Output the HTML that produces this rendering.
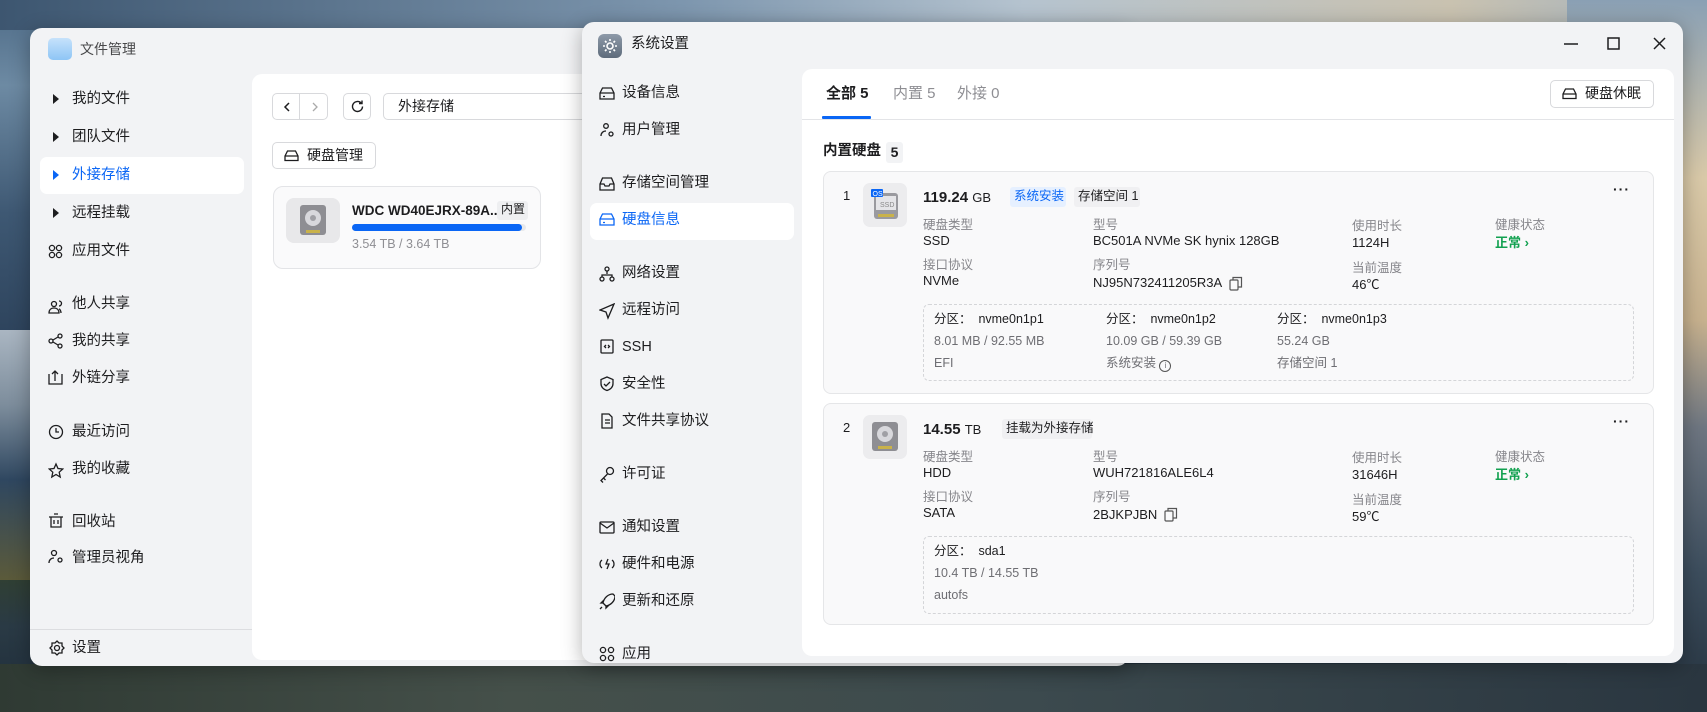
<!DOCTYPE html>
<html><head><meta charset="utf-8"><style>
*{margin:0;padding:0;box-sizing:border-box}
body{width:1707px;height:712px;overflow:hidden;position:relative;font-family:"Liberation Sans","Noto Sans CJK SC",sans-serif;color:#1d1d1f;line-height:1.3;
background:linear-gradient(180deg,#4d6a86 0%,#6d8aa3 12%,#3e5873 30%,#263a52 55%,#314030 80%,#2a3a45 88%,#1d2b38 100%)}
.bgr{position:absolute;right:0;top:0;width:140px;height:712px;background:linear-gradient(180deg,#8aa0b4 0%,#d9c9a8 25%,#c7b18e 45%,#6e7681 60%,#3d4e5e 80%,#25323e 100%)}
.bgt{position:absolute;left:0;top:0;width:1707px;height:30px;background:linear-gradient(90deg,#3d5670,#7d96ae 40%,#b5c3cf 60%,#c9c2b0 85%,#9fb0c0)}
.bgl{position:absolute;left:0;top:330px;width:40px;height:250px;background:linear-gradient(180deg,#aab6c2,#7d8d9c 30%,#2f4760 60%,#5b5a3a)}
.bgb{position:absolute;left:0;top:664px;width:1707px;height:48px;background:linear-gradient(90deg,#2f3a33,#45504a 30%,#3c4a4e 60%,#2a3640)}
.win{position:absolute;background:#f2f3f5;border-radius:12px;overflow:hidden;box-shadow:0 4px 20px rgba(0,0,0,.3)}
.a{position:absolute;white-space:nowrap}
.ico{position:absolute}
.side{font-size:14.5px;color:#1d1d1f}
.lbl{font-size:12.5px;color:#86868b}
.val{font-size:13px;color:#1d1d1f}
.card{position:absolute;background:#f9f9fa;border:1px solid #e5e6e8;border-radius:8px}
.dash{position:absolute;border:1px dashed #d4d5d8;border-radius:6px}
.pt{font-size:12.5px}
</style></head><body>
<div class="bgt"></div><div class="bgr"></div><div class="bgl"></div><div class="bgb"></div>

<!-- File manager window -->
<div class="win" style="left:30px;top:28px;width:1099px;height:638px">
  <div class="a" style="left:18px;top:10px;width:24px;height:22px;border-radius:5px;background:linear-gradient(180deg,#c6e2fb,#8ec5f5)"></div>
  <div class="a" style="left:50px;top:12px;font-size:14px;color:#48484a">文件管理</div>
  <div class="a" style="left:10px;top:129px;width:204px;height:37px;background:#fff;border-radius:7px"></div>
  <div class="a side" style="left:42px;top:62px">我的文件</div>
  <div class="a side" style="left:42px;top:100px">团队文件</div>
  <div class="a side" style="left:42px;top:138px;color:#0a66f5">外接存储</div>
  <div class="a side" style="left:42px;top:176px">远程挂载</div>
  <div class="a side" style="left:42px;top:214px">应用文件</div>
  <div class="a side" style="left:42px;top:267px">他人共享</div>
  <div class="a side" style="left:42px;top:304px">我的共享</div>
  <div class="a side" style="left:42px;top:341px">外链分享</div>
  <div class="a side" style="left:42px;top:395px">最近访问</div>
  <div class="a side" style="left:42px;top:432px">我的收藏</div>
  <div class="a side" style="left:42px;top:485px">回收站</div>
  <div class="a side" style="left:42px;top:521px">管理员视角</div>
  <div class="a side" style="left:42px;top:611px">设置</div>
  <svg class="ico" style="left:20px;top:63px" width="12" height="140" viewBox="0 0 12 140">
    <path d="M3 3l6 5-6 5z" fill="#1d1d1f"/><path d="M3 41l6 5-6 5z" fill="#1d1d1f"/><path d="M3 79l6 5-6 5z" fill="#0a66f5"/><path d="M3 117l6 5-6 5z" fill="#1d1d1f"/>
  </svg>
  <svg class="ico" style="left:18px;top:215px" width="16" height="330" viewBox="0 0 16 330" fill="none" stroke="#1d1d1f" stroke-width="1.3">
    <g transform="translate(0,1)"><circle cx="4" cy="4" r="2.6"/><circle cx="11" cy="4" r="2.6"/><circle cx="4" cy="11" r="2.6"/><circle cx="11" cy="11" r="2.6"/></g>
    <g transform="translate(0,6)"><circle cx="6" cy="55" r="2.5"/><path d="M1 64c0-4 3-5 5-5s5 1 5 5z"/><path d="M11 52a2 2 0 010 5M13 64c0-2-1-4-2-4"/></g>
    <g transform="translate(0,1)"><circle cx="3" cy="97" r="2"/><circle cx="12" cy="92" r="2"/><circle cx="12" cy="102" r="2"/><path d="M5 96l5-3M5 98l5 3"/></g>
    <path d="M1 131v10h13v-10M7 138v-9M4 131l3-3 3 3"/>
    <g transform="translate(0,9)"><circle cx="8" cy="180" r="6.5"/><path d="M8 176v4h3"/></g>
    <g transform="translate(0,10)"><path d="M8 211l2 4.5 4.8.5-3.6 3.2 1 4.8-4.2-2.5-4.2 2.5 1-4.8-3.6-3.2 4.8-.5z"/></g>
    <g transform="translate(0,12)"><path d="M3 262h10v10H3zM1 262h14M6 259h4M6 265v4M10 265v4"/></g>
    <g transform="translate(0,12)"><circle cx="6" cy="298" r="2.5"/><path d="M1 308c0-3 2-5 5-5"/><circle cx="12" cy="305" r="2"/></g>
  </svg>
  <svg class="ico" style="left:19px;top:612px" width="16" height="16" viewBox="0 0 16 16" fill="none" stroke="#1d1d1f" stroke-width="1.3"><circle cx="8" cy="8" r="2.5"/><path d="M8 1l2 2h3v3l2 2-2 2v3h-3l-2 2-2-2H3v-3L1 8l2-2V3h3z"/></svg>
  <div class="a" style="left:0;top:601px;width:222px;height:1px;background:#dcdde0"></div>
  <div class="a" style="left:222px;top:46px;width:870px;height:586px;background:#fff;border-radius:10px"></div>
  <div class="a" style="left:242px;top:65px;width:56px;height:27px;border:1px solid #d8d9dc;border-radius:5px;background:#fff"></div>
  <div class="a" style="left:269px;top:66px;width:1px;height:25px;background:#d8d9dc"></div>
  <svg class="ico" style="left:250px;top:72px" width="44" height="14"><path d="M9 3l-4 4 4 4" stroke="#1d1d1f" stroke-width="1.5" fill="none"/><path d="M33 3l4 4-4 4" stroke="#aaa" stroke-width="1.3" fill="none"/></svg>
  <div class="a" style="left:313px;top:65px;width:28px;height:27px;border:1px solid #d8d9dc;border-radius:5px"></div>
  <svg class="ico" style="left:320px;top:71px" width="15" height="15" fill="none" stroke="#1d1d1f" stroke-width="1.4"><path d="M12.5 7.5a5 5 0 11-1.5-3.6M12 1.5v3h-3"/></svg>
  <div class="a" style="left:353px;top:65px;width:300px;height:27px;border:1px solid #d8d9dc;border-radius:5px"></div>
  <div class="a" style="left:368px;top:69px;font-size:14px">外接存储</div>
  <div class="a" style="left:242px;top:114px;width:104px;height:27px;border:1px solid #d8d9dc;border-radius:5px"></div>
  <svg class="ico" style="left:254px;top:121px" width="15" height="13" fill="none" stroke="#1d1d1f" stroke-width="1.3"><path d="M1 7l2.5-5h8L14 7v4.5H1zM1 7h13"/></svg>
  <div class="a" style="left:277px;top:118px;font-size:14px">硬盘管理</div>
  <div class="a" style="left:243px;top:158px;width:268px;height:83px;border:1px solid #e3e4e7;border-radius:10px;background:#fafafb"></div>
  <div class="a" style="left:256px;top:170px;width:54px;height:45px;border-radius:8px;background:#e8e8ea"></div>
  <svg class="ico" style="left:268px;top:175px" width="30" height="35"><rect x="2" y="2" width="26" height="30" rx="3" fill="#8e8e93"/><circle cx="15" cy="15" r="8" fill="#d8d8dc"/><circle cx="15" cy="15" r="3" fill="#a0a0a5"/><rect x="8" y="27" width="14" height="3" fill="#c9b24a"/></svg>
  <div class="a" style="left:322px;top:174px;font-size:13.5px;font-weight:bold;color:#1d1d1f">WDC WD40EJRX-89A...</div>
  <div class="a" style="left:467px;top:173px;width:31px;height:19px;background:#eeeff1;border-radius:3px;font-size:12px;padding:1px 4px">内置</div>
  <div class="a" style="left:322px;top:196px;width:174px;height:7px;border-radius:4px;background:#e8e9eb"></div>
  <div class="a" style="left:322px;top:196px;width:170px;height:7px;border-radius:4px;background:#0a66f5"></div>
  <div class="a" style="left:322px;top:208px;font-size:12.5px;color:#8e8e93">3.54 TB / 3.64 TB</div>
</div>

<!-- Settings window -->
<div class="win" style="left:582px;top:22px;width:1101px;height:641px">
  <div class="a" style="left:16px;top:12px;width:24px;height:24px;border-radius:6px;background:linear-gradient(180deg,#8e9aa9,#5e6b7b)"></div>
  <svg class="ico" style="left:19px;top:15px" width="18" height="18" fill="none" stroke="#fff" stroke-width="1.6"><circle cx="9" cy="9" r="3"/><path d="M9 2v2M9 14v2M2 9h2M14 9h2M4 4l1.5 1.5M12.5 12.5L14 14M4 14l1.5-1.5M12.5 5.5L14 4"/></svg>
  <div class="a" style="left:49px;top:13px;font-size:14.5px;color:#1d1d1f">系统设置</div>
  <svg class="ico" style="left:980px;top:14px" width="110" height="16" fill="none" stroke="#1d1d1f" stroke-width="1.5"><path d="M2 8h14"/><rect x="46" y="2" width="11" height="11"/><path d="M92 2l11 11M103 2L92 13"/></svg>
  <div class="a" style="left:8px;top:181px;width:204px;height:37px;background:#fff;border-radius:7px"></div>
  <div class="a side" style="left:40px;top:62px">设备信息</div>
  <div class="a side" style="left:40px;top:99px">用户管理</div>
  <div class="a side" style="left:40px;top:152px">存储空间管理</div>
  <div class="a side" style="left:40px;top:189px;color:#0a66f5">硬盘信息</div>
  <div class="a side" style="left:40px;top:242px">网络设置</div>
  <div class="a side" style="left:40px;top:279px">远程访问</div>
  <div class="a side" style="left:40px;top:316px">SSH</div>
  <div class="a side" style="left:40px;top:353px">安全性</div>
  <div class="a side" style="left:40px;top:390px">文件共享协议</div>
  <div class="a side" style="left:40px;top:443px">许可证</div>
  <div class="a side" style="left:40px;top:496px">通知设置</div>
  <div class="a side" style="left:40px;top:533px">硬件和电源</div>
  <div class="a side" style="left:40px;top:570px">更新和还原</div>
  <div class="a side" style="left:40px;top:623px">应用</div>
  <svg class="ico" style="left:17px;top:64px" width="16" height="580" viewBox="0 0 16 580" fill="none" stroke="#1d1d1f" stroke-width="1.3">
    <path d="M1 7l2.5-5h9L15 7v6H1zM1 7h14M4 10.5h2"/>
    <circle cx="7" cy="40" r="2.3"/><path d="M2 50c0-3 2-5 5-5"/><circle cx="12" cy="48" r="2"/>
    <path d="M1 98l2.5-6h9L15 98v6H1zM1 98h4l1 2h4l1-2h4"/>
    <path d="M1 133l2.5-5h9L15 133v6H1zM1 133h14M4 136.5h2" stroke="#0a66f5"/>
    <circle cx="8" cy="183" r="2"/><circle cx="3" cy="193" r="2"/><circle cx="13" cy="193" r="2"/><path d="M8 185v3M3 191v-2h10v2"/>
    <path d="M15 218L1 224l6 2 2 6z"/>
    <rect x="2" y="254" width="12" height="13" rx="1"/><path d="M7 259l-1.5 1.5L7 262M9 259l1.5 1.5L9 262"/>
    <g transform="translate(0,2)"><path d="M8 289l6 2.5v4c0 4-3 6-6 7-3-1-6-3-6-7v-4z M5 296l2 2 4-4"/></g>
    <g transform="translate(0,2)"><path d="M3 326h7l3 3v11H3zM6 332h5M6 335h5"/></g>
    <g transform="translate(0,3)"><circle cx="11" cy="382" r="3.5"/><path d="M8.5 385L2 391.5l2 2M4.5 389l2 2"/></g>
    <g transform="translate(0,2)"><rect x="1" y="434" width="14" height="11" rx="1"/><path d="M1 435l7 5 7-5"/></g>
    <g transform="translate(0,4)"><path d="M3 470a5 5 0 000 8M13 470a5 5 0 010 8M9 469l-2 5h3l-2 5"/></g>
    <g transform="translate(0,5)"><path d="M14 503c-5 0-9 4-10 9l3 3c5-1 9-5 9-10zM4 512l-2 0 3-3M7 515v2l3-3M3 516l-2 2"/></g>
    <g transform="translate(0,2)"><circle cx="4" cy="562" r="2.6"/><circle cx="12" cy="562" r="2.6"/><circle cx="4" cy="570" r="2.6"/><circle cx="12" cy="570" r="2.6"/></g>
  </svg>

  <div class="a" style="left:220px;top:47px;width:872px;height:587px;background:#fff;border-radius:10px"></div>
  <div class="a" style="left:244px;top:62px;font-size:15px;font-weight:bold">全部 5</div>
  <div class="a" style="left:311px;top:62px;font-size:15px;color:#8e8e93">内置 5</div>
  <div class="a" style="left:375px;top:62px;font-size:15px;color:#8e8e93">外接 0</div>
  <div class="a" style="left:240px;top:94px;width:49px;height:3px;background:#0a66f5;border-radius:1px"></div>
  <div class="a" style="left:220px;top:97px;width:872px;height:1px;background:#e3e4e7"></div>
  <div class="a" style="left:968px;top:58px;width:104px;height:28px;border:1px solid #d8d9dc;border-radius:5px"></div>
  <svg class="ico" style="left:980px;top:65px" width="15" height="13" fill="none" stroke="#1d1d1f" stroke-width="1.3"><path d="M1 7l2.5-5h8L14 7v4.5H1zM1 7h13"/></svg>
  <div class="a" style="left:1003px;top:62px;font-size:14px">硬盘休眠</div>
  <div class="a" style="left:241px;top:120px;font-size:14.5px;font-weight:bold">内置硬盘</div>
  <div class="a" style="left:304px;top:120px;width:17px;height:21px;background:#f2f3f5;border-radius:3px;font-size:14px;font-weight:bold;text-align:center;padding-top:1px">5</div>

  <div class="card" style="left:241px;top:149px;width:831px;height:223px"></div>
  <div class="a val" style="left:261px;top:166px">1</div>
  <div class="a" style="left:281px;top:161px;width:44px;height:44px;background:#ececee;border-radius:7px"></div>
  <svg class="ico" style="left:287px;top:165px" width="32" height="36"><rect x="5" y="6" width="24" height="26" rx="3" fill="#9a9a9f"/><rect x="7" y="9" width="20" height="14" fill="#e5e5e8"/><text x="11" y="20" font-size="7" fill="#888" font-family="Liberation Sans">SSD</text><rect x="9" y="27" width="16" height="3" fill="#c9b24a"/><rect x="2" y="2" width="12" height="8" rx="1" fill="#0a66f5"/><text x="3.5" y="9" font-size="7" fill="#fff" font-family="Liberation Sans">OS</text></svg>
  <div class="a" style="left:341px;top:166px;font-size:15px;font-weight:bold">119.24 <span style="font-weight:normal;font-size:13px">GB</span></div>
  <div class="a" style="left:428px;top:165px;width:56px;height:20px;background:#e6f0ff;border-radius:3px;font-size:12.5px;color:#0a66f5;padding:1px 4px">系统安装</div>
  <div class="a" style="left:492px;top:165px;width:66px;height:20px;background:#f0f0f2;border-radius:3px;font-size:12.5px;padding:1px 4px">存储空间 1</div>
  <div class="a" style="left:1031px;top:158px;font-size:14px;font-weight:bold;letter-spacing:1px">···</div>
  <div class="a lbl" style="left:341px;top:195px">硬盘类型</div><div class="a val" style="left:341px;top:211px">SSD</div>
  <div class="a lbl" style="left:511px;top:195px">型号</div><div class="a val" style="left:511px;top:211px">BC501A NVMe SK hynix 128GB</div>
  <div class="a lbl" style="left:770px;top:196px">使用时长</div><div class="a val" style="left:770px;top:213px">1124H</div>
  <div class="a lbl" style="left:913px;top:195px">健康状态</div><div class="a val" style="left:913px;top:213px;color:#12a150;font-weight:bold">正常 ›</div>
  <div class="a lbl" style="left:341px;top:235px">接口协议</div><div class="a val" style="left:341px;top:251px">NVMe</div>
  <div class="a lbl" style="left:511px;top:235px">序列号</div><div class="a val" style="left:511px;top:253px">NJ95N732411205R3A</div>
  <svg class="ico" style="left:647px;top:254px" width="14" height="15" fill="none" stroke="#555" stroke-width="1.2"><rect x="1" y="4" width="8" height="10" rx="1"/><path d="M4 4V1.5h8.5v9.5H9"/></svg>
  <div class="a lbl" style="left:770px;top:238px">当前温度</div><div class="a val" style="left:770px;top:255px">46℃</div>
  <div class="dash" style="left:341px;top:282px;width:711px;height:77px"></div>
  <div class="a pt" style="left:352px;top:289px">分区：&nbsp; nvme0n1p1</div>
  <div class="a pt" style="left:352px;top:311px;color:#6e6e73">8.01 MB / 92.55 MB</div>
  <div class="a pt" style="left:352px;top:333px;color:#6e6e73">EFI</div>
  <div class="a pt" style="left:524px;top:289px">分区：&nbsp; nvme0n1p2</div>
  <div class="a pt" style="left:524px;top:311px;color:#6e6e73">10.09 GB / 59.39 GB</div>
  <div class="a pt" style="left:524px;top:333px;color:#6e6e73">系统安装 <span style="display:inline-block;width:12px;height:12px;border:1px solid #555;border-radius:50%;font-size:8px;text-align:center;line-height:10px;vertical-align:-1px">i</span></div>
  <div class="a pt" style="left:695px;top:289px">分区：&nbsp; nvme0n1p3</div>
  <div class="a pt" style="left:695px;top:311px;color:#6e6e73">55.24 GB</div>
  <div class="a pt" style="left:695px;top:333px;color:#6e6e73">存储空间 1</div>

  <div class="card" style="left:241px;top:381px;width:831px;height:222px"></div>
  <div class="a val" style="left:261px;top:398px">2</div>
  <div class="a" style="left:281px;top:393px;width:44px;height:44px;background:#ececee;border-radius:7px"></div>
  <svg class="ico" style="left:288px;top:398px" width="30" height="34"><rect x="2" y="2" width="26" height="29" rx="3" fill="#8e8e93"/><circle cx="15" cy="14" r="8" fill="#d8d8dc"/><circle cx="15" cy="14" r="3" fill="#a0a0a5"/><rect x="8" y="26" width="14" height="3" fill="#c9b24a"/></svg>
  <div class="a" style="left:341px;top:398px;font-size:15px;font-weight:bold">14.55 <span style="font-weight:normal;font-size:13px">TB</span></div>
  <div class="a" style="left:420px;top:397px;width:90px;height:20px;background:#f0f0f2;border-radius:3px;font-size:12.5px;padding:1px 4px">挂载为外接存储</div>
  <div class="a" style="left:1031px;top:390px;font-size:14px;font-weight:bold;letter-spacing:1px">···</div>
  <div class="a lbl" style="left:341px;top:427px">硬盘类型</div><div class="a val" style="left:341px;top:443px">HDD</div>
  <div class="a lbl" style="left:511px;top:427px">型号</div><div class="a val" style="left:511px;top:443px">WUH721816ALE6L4</div>
  <div class="a lbl" style="left:770px;top:428px">使用时长</div><div class="a val" style="left:770px;top:445px">31646H</div>
  <div class="a lbl" style="left:913px;top:427px">健康状态</div><div class="a val" style="left:913px;top:445px;color:#12a150;font-weight:bold">正常 ›</div>
  <div class="a lbl" style="left:341px;top:467px">接口协议</div><div class="a val" style="left:341px;top:483px">SATA</div>
  <div class="a lbl" style="left:511px;top:467px">序列号</div><div class="a val" style="left:511px;top:485px">2BJKPJBN</div>
  <svg class="ico" style="left:582px;top:485px" width="14" height="15" fill="none" stroke="#555" stroke-width="1.2"><rect x="1" y="4" width="8" height="10" rx="1"/><path d="M4 4V1.5h8.5v9.5H9"/></svg>
  <div class="a lbl" style="left:770px;top:470px">当前温度</div><div class="a val" style="left:770px;top:487px">59℃</div>
  <div class="dash" style="left:341px;top:514px;width:711px;height:78px"></div>
  <div class="a pt" style="left:352px;top:521px">分区：&nbsp; sda1</div>
  <div class="a pt" style="left:352px;top:543px;color:#6e6e73">10.4 TB / 14.55 TB</div>
  <div class="a pt" style="left:352px;top:565px;color:#6e6e73">autofs</div>
</div>
</body></html>
